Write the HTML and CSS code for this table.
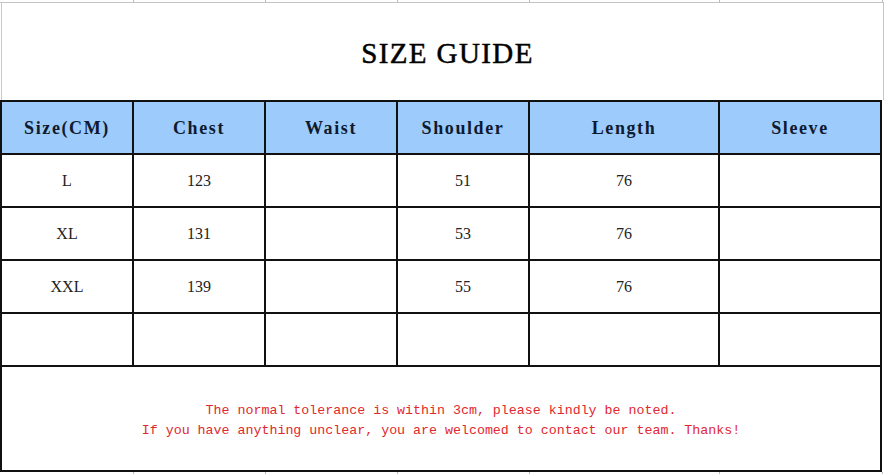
FILE: index.html
```html
<!DOCTYPE html>
<html lang="en">
<head>
<meta charset="utf-8">
<title>Size Guide</title>
<link rel="stylesheet" href="styles.css">
</head>
<body>
<div class="sheet">
  <div class="ticks ticks-top">
    <span></span><span></span><span></span><span></span><span></span><span></span>
  </div>
  <div class="title">SIZE GUIDE</div>
  <div class="table">
    <div class="cell head">Size(CM)</div>
    <div class="cell head">Chest</div>
    <div class="cell head">Waist</div>
    <div class="cell head">Shoulder</div>
    <div class="cell head">Length</div>
    <div class="cell head">Sleeve</div>

    <div class="cell">L</div>
    <div class="cell">123</div>
    <div class="cell"></div>
    <div class="cell">51</div>
    <div class="cell">76</div>
    <div class="cell"></div>

    <div class="cell">XL</div>
    <div class="cell">131</div>
    <div class="cell"></div>
    <div class="cell">53</div>
    <div class="cell">76</div>
    <div class="cell"></div>

    <div class="cell">XXL</div>
    <div class="cell">139</div>
    <div class="cell"></div>
    <div class="cell">55</div>
    <div class="cell">76</div>
    <div class="cell"></div>

    <div class="cell"></div>
    <div class="cell"></div>
    <div class="cell"></div>
    <div class="cell"></div>
    <div class="cell"></div>
    <div class="cell"></div>

    <div class="cell note">
      <p>The normal tolerance is within 3cm, please kindly be noted.</p>
      <p>If you have anything unclear, you are welcomed to contact our team. Thanks!</p>
    </div>
  </div>
  <div class="ticks ticks-bottom">
    <span></span><span></span><span></span><span></span><span></span><span></span>
  </div>
</div>
</body>
</html>
```

FILE: styles.css
```css
* { box-sizing: border-box; }

html, body {
  margin: 0;
  padding: 0;
  background: #ffffff;
}

.sheet {
  width: 884px;
  height: 475px;
  overflow: hidden;
  background: #ffffff;
}

.ticks {
  display: grid;
  grid-template-columns: 134px 132px 132px 132px 190px 163px;
  width: 884px;
  height: 2px;
}

.ticks span {
  border-right: 1px solid #b8b8b8;
}

.ticks-top {
  height: 3px;
  border-bottom: 1px solid #c4c4c4;
}

.title {
  width: 883px;
  height: 97px;
  margin-left: 1px;
  padding-top: 3px;
  padding-left: 10px;
  border-left: 1px solid #c8c8c8;
  border-right: 1px solid #c8c8c8;
  display: flex;
  align-items: center;
  justify-content: center;
  font-family: "Liberation Serif", "Times New Roman", serif;
  font-size: 29px;
  letter-spacing: 1.4px;
  color: #000000;
  -webkit-text-stroke: 0.5px #000000;
}

.table {
  display: grid;
  grid-template-columns: 132px 132px 132px 132px 190px 162px;
  grid-template-rows: repeat(5, 53px) 105px;
  width: 882px;
  border-left: 2px solid #111111;
  border-top: 2px solid #111111;
}

.cell {
  border-right: 2px solid #111111;
  border-bottom: 2px solid #111111;
  display: flex;
  align-items: center;
  justify-content: center;
  font-family: "Liberation Serif", "Times New Roman", serif;
  font-size: 16px;
  color: #222222;
}

.head {
  background: #9dcbfb;
  font-family: "Liberation Serif", "Times New Roman", serif;
  font-weight: bold;
  font-size: 18px;
  letter-spacing: 1.6px;
  color: #0e1a30;
  padding-top: 2px;
}

.note {
  grid-column: 1 / -1;
  flex-direction: column;
  font-family: "Liberation Mono", "DejaVu Sans Mono", monospace;
  font-size: 13.3px;
  line-height: 20px;
  color: #e0282e;
  padding-top: 4px;
}

.note p {
  margin: 0;
}

.ticks-bottom {
  height: 2px;
}
```
